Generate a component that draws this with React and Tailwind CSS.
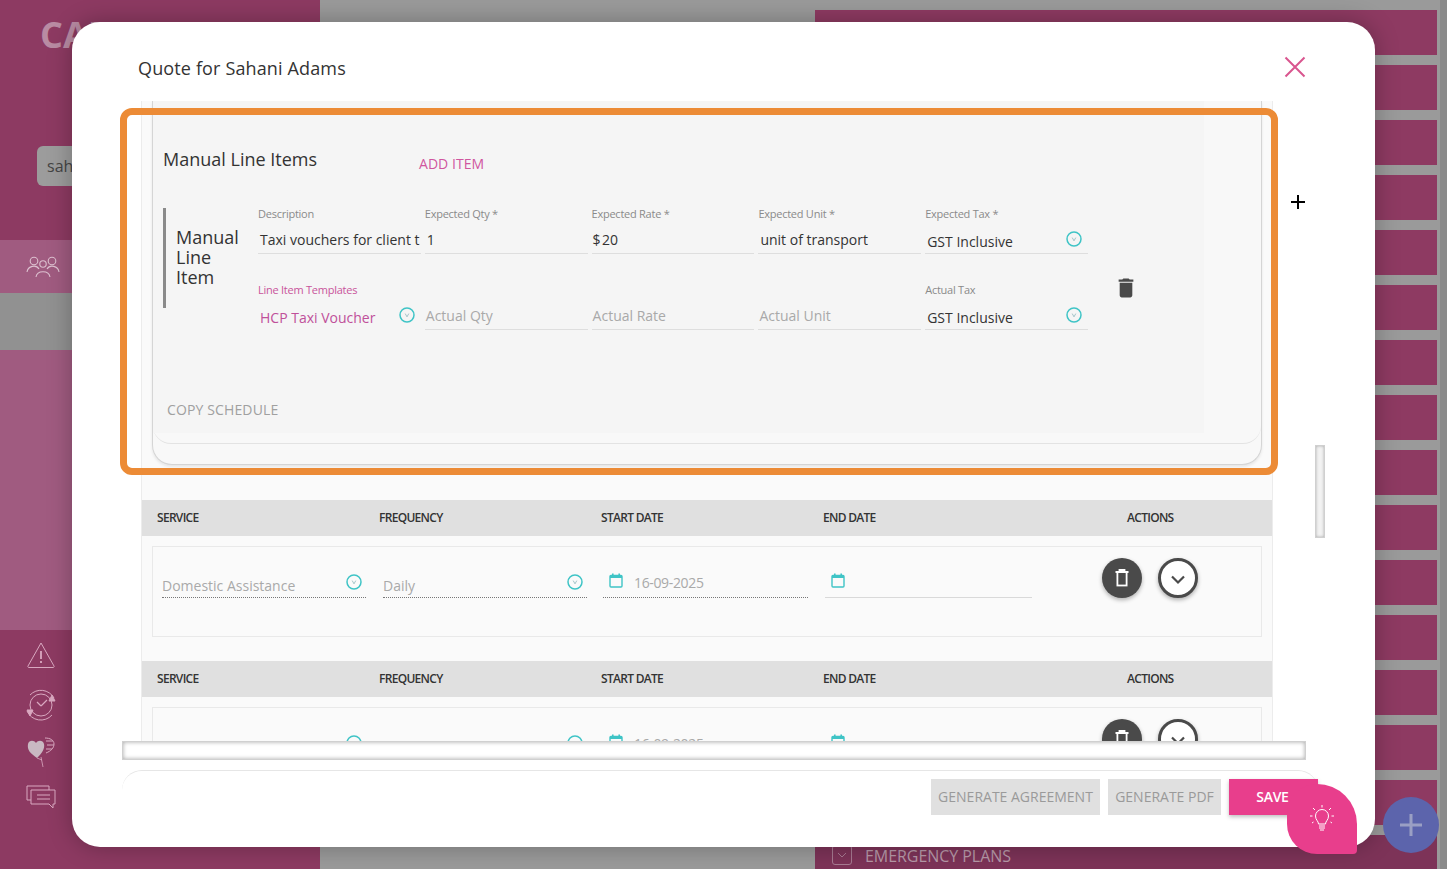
const font = { fontFamily: '"Open Sans", sans-serif' };

function Chevron({ className = "" }) {
  return (
    <svg width="16" height="16" viewBox="0 0 16 16" className={className}>
      <circle cx="8" cy="8" r="7" fill="none" stroke="#3fc4c6" strokeWidth="1.5" />
      <path d="M6.200 6.600 8 9.800l1.800-3.200" fill="none" stroke="#8fb8bc" strokeWidth="0.8" />
    </svg>
  );
}

function Calendar({ className = "" }) {
  return (
    <svg width="14" height="15" viewBox="0 0 14 15" className={className}>
      <rect x="1" y="2.500" width="12" height="11.500" rx="1" fill="none" stroke="#3fc4c6" strokeWidth="1.400" />
      <rect x="1" y="2" width="12" height="3" fill="#3fc4c6" />
      <rect x="3" y="0.500" width="1.600" height="2" fill="#3fc4c6" />
      <rect x="9.400" y="0.500" width="1.600" height="2" fill="#3fc4c6" />
    </svg>
  );
}

function Field({ label, value, placeholder, pink, select }) {
  return (
    <div className={`relative h-[46px] ${pink ? "" : "border-b border-[#dedede]"}`}>
      <div className={`-mt-[1px] h-[14px] text-[11px] leading-[13px] tracking-[-0.25px] ${pink ? "text-[#c9549b]" : "text-[#8a8a8a]"}`}>{label}</div>
      {placeholder ? (
        <div className="pl-[1px] pt-[9px] text-[14px] leading-[19px] text-[#a9a9a9]">{placeholder}</div>
      ) : (
        <div className={`overflow-hidden whitespace-nowrap pl-[2px] text-[14px] leading-[19px] ${select ? "pt-[11px]" : "pt-[9px]"} ${pink ? "text-[#c0509a]" : "text-[#333]"}`}>{value}</div>
      )}
      {select && <Chevron className="absolute right-[6px] top-[23px]" />}
    </div>
  );
}

function ServiceHeader() {
  return (
    <div className="flex h-[36px] items-center bg-[#e0e0e0] pl-[15px] text-[12px] font-semibold tracking-[-0.7px] text-[#333]">
      <div className="w-[222px]">SERVICE</div>
      <div className="w-[222px]">FREQUENCY</div>
      <div className="w-[222px]">START DATE</div>
      <div className="w-[304px]">END DATE</div>
      <div>ACTIONS</div>
    </div>
  );
}

function SelectCell({ text, w }) {
  return (
    <div className={`relative h-[51px] border-b border-dotted border-[#777] ${w}`}>
      <div className="pt-[29px] text-[14px] leading-[19px] text-[#a9a9a9]">{text}</div>
      <Chevron className="absolute right-[4px] top-[27px]" />
    </div>
  );
}

function ServiceRow({ service, frequency, start }) {
  return (
    <div className="mx-[10px] flex h-[91px] border border-[#e9e9e9] bg-[#fafafa] pl-[9px]">
      <SelectCell text={service} w="w-[204px]" />
      <div className="w-[17px]" />
      <SelectCell text={frequency} w="w-[204px]" />
      <div className="w-[16px]" />
      <div className="flex h-[51px] w-[205px] items-start gap-[11px] border-b border-dotted border-[#777] pl-[6px] pt-[26px]">
        <Calendar />
        <span className="text-[14px] leading-[19px] tracking-[-0.35px] text-[#a9a9a9]">{start}</span>
      </div>
      <div className="w-[17px]" />
      <div className="h-[51px] w-[207px] border-b border-[#d9d9d9] pl-[6px] pt-[26px]">
        <Calendar />
      </div>
      <div className="ml-[70px] flex items-start gap-[16px] pt-[11px]">
        <div className="flex h-[40px] w-[40px] items-center justify-center rounded-full bg-[#4a4a4a] shadow-[0_2px_4px_rgba(0,0,0,0.3)]">
          <svg width="14" height="18" viewBox="0 0 14 18" fill="none" stroke="#fff" strokeWidth="1.800">
            <path d="M0.500 3h13M4.500 3V1h5v2" />
            <rect x="2.400" y="3" width="9.200" height="13.500" />
          </svg>
        </div>
        <div className="flex h-[40px] w-[40px] items-center justify-center rounded-full border-[3px] border-[#4a4a4a] bg-white shadow-[0_2px_4px_rgba(0,0,0,0.3)]">
          <svg width="16" height="12" viewBox="0 0 16 12" fill="none" stroke="#4a4a4a" strokeWidth="2.200" className="mt-[3px]">
            <path d="M2 2.500l6 6 6-6" />
          </svg>
        </div>
      </div>
    </div>
  );
}

function SidebarIcons() {
  const s = "#d9a8c0";
  return (
    <div className="flex flex-col items-center pt-[11px]">
      <svg width="30" height="28" viewBox="0 0 30 28" fill="none" stroke={s} strokeWidth="1">
        <path d="M15 2 28 25a1 1 0 0 1-1 1.500H3A1 1 0 0 1 2 25Z" />
        <path d="M15 10v8M15 20v2" strokeWidth="1.800" />
      </svg>
      <svg width="32" height="32" viewBox="0 0 32 32" fill="none" stroke={s} strokeWidth="1" className="mt-[20px]">
        <circle cx="16" cy="16" r="11" />
        <path d="M5 6A15 15 0 0 1 29 9M27 26A15 15 0 0 1 2 22" />
        <path d="M16 17l-4-4M16 17l6-6" strokeWidth="1.200" />
        <path d="M27 6l3 6-6 0ZM5 27l-3-6 6 0Z" fill={s} />
      </svg>
      <svg width="28" height="30" viewBox="0 0 28 30" className="mt-[16px]">
        <path d="M10 21C3 16 0 13 1 7c1-4 6-4 8-1 2-3 7-3 8 1 1 5-2 9-7 14Z" fill="#c9b8c2" />
        <path d="M18 1c5 0 9 2 9 6s-3 7-8 9M19 4h7M20 8h7M19 12h6" fill="none" stroke={s} strokeWidth="1" />
        <path d="M14 20l2 10M10 21l5 2" fill="none" stroke={s} strokeWidth="0.800" />
      </svg>
      <svg width="30" height="24" viewBox="0 0 30 24" className="mt-[18px]" fill="none" stroke={s} strokeWidth="1">
        <path d="M23 5V1H1v14h4" />
        <path d="M5 5h24v14h-2v4l-4-4H5Z" />
        <path d="M11 10h13M11 14h13" />
      </svg>
    </div>
  );
}

export default function App() {
  return (
    <div className="relative h-[869px] w-[1447px] overflow-hidden bg-[#9a9a9a]" style={font}>
      <div className="flex h-full">
        <aside className="h-full w-[320px] shrink-0 bg-[#8d3a62]">
          <div className="h-[146px] pl-[40px] pt-[10px] text-[36px] font-bold leading-[50px] text-[#b98ba3]">CAREVISION</div>
          <div className="ml-[37px] flex h-[40px] w-[120px] items-center rounded-[6px] bg-[#9c9c9c] pl-[10px] text-[16px] text-[#444]">sah</div>
          <div className="h-[54px]" />
          <div className="flex h-[53px] items-center bg-[#a05b80] pl-[26px]">
            <svg width="34" height="22" viewBox="0 0 34 22" fill="none" stroke="#dcc0cf" strokeWidth="1.100">
              <circle cx="8" cy="5" r="3.800" /><circle cx="17" cy="8" r="3.200" /><circle cx="26" cy="5" r="3.800" />
              <path d="M1 16c1-6 9-8 12-3M33 16c-1-6-9-8-12-3M10 21c1-7 13-7 14 0" />
            </svg>
          </div>
          <div className="h-[57px] bg-[#919191]" />
          <div className="h-[280px] bg-[#a05b80]" />
          <div className="w-[82px]"><SidebarIcons /></div>
        </aside>
        <main className="h-full w-[495px] shrink-0 bg-[#9a9a9a]" />
        <section className="flex h-full w-[622px] shrink-0 flex-col gap-[10px] pt-[10px]">
          {Array.from({ length: 15 }).map((_, i) => (
            <div key={i} className="h-[45px] shrink-0 bg-[#8e3a62]" />
          ))}
          <div className="flex h-[34px] shrink-0 items-start gap-[13px] bg-[#7d3358] pl-[17px] pt-[10px]">
            <div className="flex h-[20px] w-[20px] items-center justify-center rounded-[3px] border border-[#a87a92]">
              <svg width="10" height="7" viewBox="0 0 10 7" fill="none" stroke="#a87a92"><path d="M1 1l4 4 4-4" /></svg>
            </div>
            <span className="text-[16px] leading-[22px] tracking-[-0.05px] text-[#b799a8]">EMERGENCY PLANS</span>
          </div>
        </section>
        <div className="h-full w-[3px] shrink-0 bg-[#9a9a9a]" />
        <div className="h-full w-[7px] shrink-0 bg-[#8a8a8a]" />
      </div>

      {/* modal */}
      <div className="absolute left-[72px] top-[22px] flex h-[825px] w-[1303px] flex-col rounded-[28px] bg-white shadow-[0_0_24px_rgba(0,0,0,0.28)]">
        <div className="relative h-[79px] shrink-0 pl-[66px] pt-[34px] text-[18px] leading-[25px] tracking-[0.14px] text-[#333]">
          Quote for Sahani Adams
          <svg width="22" height="22" viewBox="0 0 22 22" className="absolute left-[1212px] top-[34px]" stroke="#d9558f" strokeWidth="2">
            <path d="M1.500 1.500l19 19M20.500 1.500l-19 19" />
          </svg>
        </div>

        {/* scroll area */}
        <div className="ml-[50px] h-[640px] w-[1184px] shrink-0 overflow-hidden">
          <div className="ml-[19px] w-[1132px] border-x border-[#ececec] bg-[#fafafa]">
            <div className="mx-[10px] h-[364px] rounded-b-[20px] border-x border-b border-[#d5d5d5] bg-[#f8f8f8] shadow-[0_2px_3px_rgba(0,0,0,0.08)]">
              <div className="h-[343px] rounded-b-[18px] border-b border-[#e3e3e3]">
                <div className="h-[332px] w-[1051px] bg-[#f5f5f5] pl-[10px]">
                  <div className="flex h-[107px]">
                    <div className="w-[256px] pt-[46px] text-[18px] leading-[25px] text-[#333]">Manual Line Items</div>
                    <div className="pt-[53px] text-[14px] leading-[19px] tracking-[0.05px] text-[#d0569f]">ADD ITEM</div>
                  </div>
                  <div className="flex">
                    <div className="h-[100px] w-[95px] shrink-0 border-l-[3px] border-[#8a8a8a] pl-[10px] pr-[15px] pt-[19px] text-[18px] leading-[20px] text-[#333]">
                      Manual Line Item
                    </div>
                    <div className="grid w-[830px] grid-cols-[repeat(5,162.800px)] gap-x-[4px] gap-y-[30px]">
                      <Field label="Description" value="Taxi vouchers for client t" />
                      <Field label="Expected Qty *" value="1" />
                      <Field label="Expected Rate *" value={<span className="-ml-[1px]">$&#8202;20</span>} />
                      <Field label="Expected Unit *" value="unit of transport" />
                      <Field label="Expected Tax *" value="GST Inclusive" select />
                      <Field label="Line Item Templates" value="HCP Taxi Voucher" pink select />
                      <Field placeholder="Actual Qty" />
                      <Field placeholder="Actual Rate" />
                      <Field placeholder="Actual Unit" />
                      <Field label="Actual Tax" value="GST Inclusive" select />
                    </div>
                    <div className="pl-[30px] pt-[70px]">
                      <svg width="16" height="20" viewBox="4.500 2.500 15 19" fill="#4a4a4a">
                        <path d="M6 19c0 1.100.9 2 2 2h8c1.100 0 2-.9 2-2V7H6v12zM19 4h-3.500l-1-1h-5l-1 1H5v2h14V4z" />
                      </svg>
                    </div>
                  </div>
                  <div className="pl-[4px] pt-[70px] text-[14px] leading-[19px] tracking-[0.13px] text-[#a0a0a0]">COPY SCHEDULE</div>
                </div>
              </div>
            </div>
            <div className="h-[35px]" />
            <ServiceHeader />
            <div className="h-[10px]" />
            <ServiceRow service="Domestic Assistance" frequency="Daily" start="16-09-2025" />
            <div className="h-[24px]" />
            <ServiceHeader />
            <div className="h-[10px]" />
            <ServiceRow start="16-09-2025" />
          </div>
        </div>

        {/* horizontal scrollbar */}
        <div className="ml-[50px] h-[19px] w-[1184px] shrink-0 border border-[#d0d0d0] bg-white shadow-[inset_0_0_4px_rgba(0,0,0,0.35)]" />

        {/* footer */}
        <div className="ml-[50px] mt-[10px] flex h-[77px] w-[1196px] items-start justify-end gap-[8px] rounded-tl-[20px] rounded-tr-[20px] border-t border-[#e6e6e6] pt-[8px]">
          <div className="flex h-[36px] w-[169px] items-center justify-center bg-[#e0e0e0] pb-[2px] text-[14px] text-[#9a9a9a]">GENERATE AGREEMENT</div>
          <div className="flex h-[36px] w-[113px] items-center justify-center bg-[#e0e0e0] pb-[2px] text-[14px] text-[#9a9a9a]">GENERATE PDF</div>
          <div className="flex h-[36px] w-[89px] items-center justify-center bg-[#e83e8c] pb-[2px] pr-[2px] text-[14px] font-semibold tracking-[-0.3px] text-white shadow-[0_2px_4px_rgba(0,0,0,0.25)]">SAVE</div>
        </div>
      </div>

      {/* vertical scrollbar */}
      <div className="absolute left-[1315px] top-[445px] h-[93px] w-[10px] border border-[#d0d0d0] bg-[#f2f2f2] shadow-[inset_0_0_3px_rgba(0,0,0,0.3)]" />

      {/* orange highlight */}
      <div className="absolute left-[120px] top-[108px] h-[367px] w-[1158px] rounded-[12px] border-[7px] border-[#ec8b36]" />

      {/* cursor */}
      <svg width="14" height="14" viewBox="0 0 14 14" className="absolute left-[1291px] top-[195px]" stroke="#000" strokeWidth="2">
        <path d="M7 0v14M0 7h14" />
      </svg>

      {/* help bubble */}
      <div className="absolute left-[1287px] top-[784px] flex h-[70px] w-[70px] items-center justify-center rounded-bl-[30px] rounded-br-[4px] rounded-tl-[30px] rounded-tr-[40px] bg-[#e83e8c]">
        <svg width="24" height="28" viewBox="0 0 24 28" fill="none" stroke="#fff" strokeWidth="1">
          <path d="M8.500 19c0-3-3-4-3-8a6.500 6.500 0 0 1 13 0c0 4-3 5-3 8Z" />
          <path d="M9 21h6M9 23h6M10 25h4" />
          <path d="M12 0v2.500M3 3l2 2M21 3l-2 2M0 11h2.500M21.500 11H24M2 18l1.500-1M22 18l-1.500-1" />
        </svg>
      </div>

      {/* fab */}
      <div className="absolute left-[1383px] top-[797px] flex h-[56px] w-[56px] items-center justify-center rounded-full bg-[#5c64ac]">
        <svg width="24" height="24" viewBox="0 0 24 24" stroke="#9a9fc4" strokeWidth="3"><path d="M12 1v22M1 12h22" /></svg>
      </div>
    </div>
  );
}
